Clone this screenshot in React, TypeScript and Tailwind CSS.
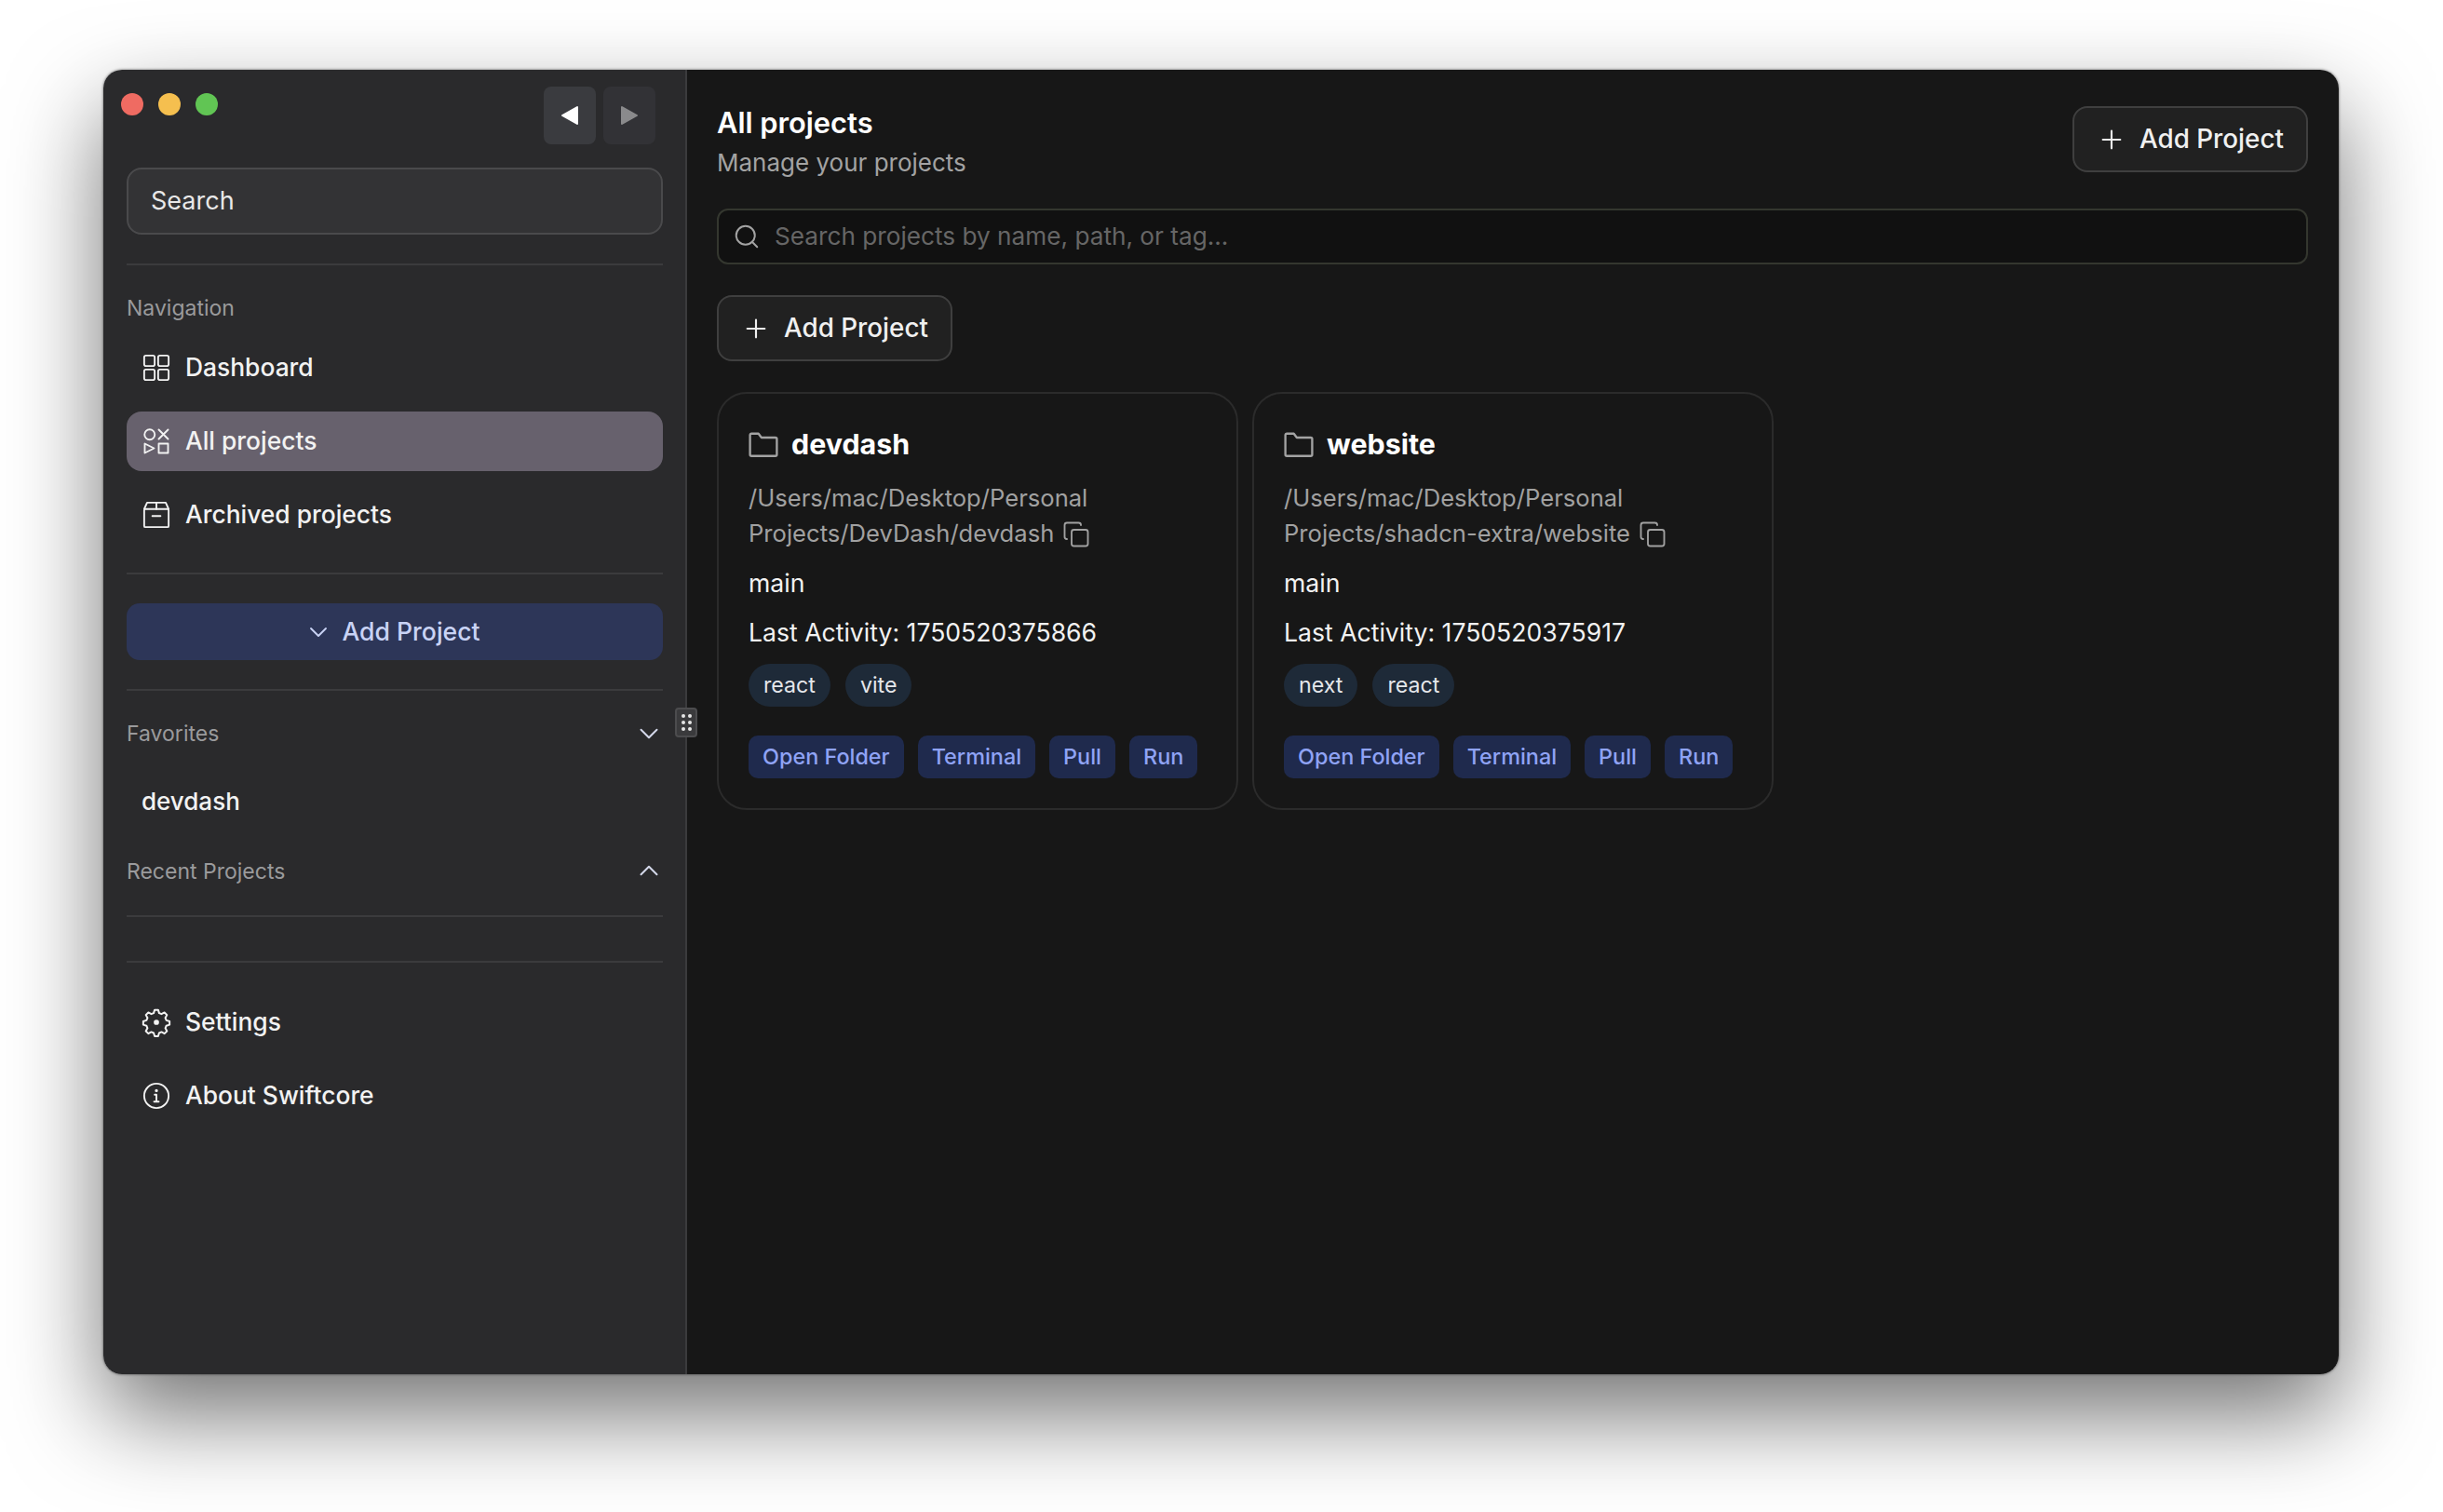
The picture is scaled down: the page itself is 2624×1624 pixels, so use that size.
import { ChevronDown, ChevronUp, Copy, Plus, Search } from "lucide-react";
import type { ReactNode } from "react";

const projects = [
  {
    name: "devdash",
    path: ["/Users/mac/Desktop/Personal", "Projects/DevDash/devdash"],
    branch: "main",
    activity: "1750520375866",
    tags: ["react", "vite"],
  },
  {
    name: "website",
    path: ["/Users/mac/Desktop/Personal", "Projects/shadcn-extra/website"],
    branch: "main",
    activity: "1750520375917",
    tags: ["next", "react"],
  },
];

const actions = ["Open Folder", "Terminal", "Pull", "Run"];

function Svg({ children, className }: { children: ReactNode; className: string }) {
  return (
    <svg viewBox="0 0 24 24" fill="none" stroke="currentColor" strokeWidth="1.5" strokeLinecap="round" strokeLinejoin="round" className={className}>
      {children}
    </svg>
  );
}

function DashboardIcon() {
  return (
    <Svg className="w-[30px] h-[30px] shrink-0">
      <rect x="1.5" y="1.5" width="9" height="9" rx="1.5" />
      <rect x="13.5" y="1.5" width="9" height="9" rx="1.5" />
      <rect x="1.5" y="13.5" width="9" height="9" rx="1.5" />
      <rect x="13.5" y="13.5" width="9" height="9" rx="1.5" />
    </Svg>
  );
}

function ShapesIcon() {
  return (
    <Svg className="w-[30px] h-[30px] shrink-0">
      <circle cx="6.2" cy="6.2" r="4.4" />
      <path d="M14 2l8 8M22 2l-8 8" />
      <path d="M2 14v8l8-4z" />
      <rect x="14" y="14" width="8" height="8" />
    </Svg>
  );
}

function ArchiveIcon() {
  return (
    <Svg className="w-[30px] h-[30px] shrink-0">
      <rect x="1.5" y="7" width="21" height="15.5" rx="1" />
      <path d="M1.5 7L4 1.5h16L22.5 7M12 1.5V7M8.5 13h7" />
    </Svg>
  );
}

function GearIcon() {
  return (
    <Svg className="w-[32px] h-[32px] shrink-0 -mx-[1px]">
      <path d="M10.6 2h2.8l.8 2.6 1.9.8 2.4-1.3 2 2-1.3 2.4.8 1.9 2.6.8v2.8l-2.6.8-.8 1.9 1.3 2.4-2 2-2.4-1.3-1.9.8-.8 2.6h-2.8l-.8-2.6-1.9-.8-2.4 1.3-2-2 1.3-2.4-.8-1.9-2.6-.8v-2.8l2.6-.8.8-1.9-1.3-2.4 2-2 2.4 1.3 1.9-.8z" />
      <circle cx="12" cy="12" r="1.4" fill="currentColor" />
    </Svg>
  );
}

function InfoIcon() {
  return (
    <Svg className="w-[30px] h-[30px] shrink-0">
      <circle cx="12" cy="12" r="10.5" />
      <path d="M10.5 11H12v6M10 17h4" />
      <circle cx="12" cy="7.5" r="0.6" fill="currentColor" />
    </Svg>
  );
}

function FolderIcon() {
  return (
    <svg viewBox="0 0 30 26" fill="none" stroke="currentColor" strokeWidth="2.2" strokeLinejoin="round" className="w-[32px] h-[28px] shrink-0 text-[#a3a3a3]">
      <path d="M1.5 3a1.5 1.5 0 0 1 1.5-1.5h7l3 4h14a1.5 1.5 0 0 1 1.5 1.5v15.5A1.5 1.5 0 0 1 27 24H3a1.5 1.5 0 0 1-1.5-1.5z" />
    </svg>
  );
}

function NavRow({ icon, label, active }: { icon: ReactNode; label: string; active?: boolean }) {
  return (
    <div className={`h-[64px] flex items-center gap-[16px] pl-[17px] rounded-[16px] text-[26.4px] font-medium text-[#f2f2f2] ${active ? "bg-[#67616d]" : ""}`}>
      {icon}
      <span>{label}</span>
    </div>
  );
}

function Divider({ className }: { className: string }) {
  return <div className={`h-[2px] bg-[#3b3b3d] ${className}`} />;
}

function AddProjectButton() {
  return (
    <button className="h-[71px] w-[253px] shrink-0 flex items-center gap-[14px] pl-[24px] rounded-[16px] border-2 border-[#3f3f3f] bg-[#212121] text-[27.8px] font-medium text-[#f0f0f0]">
      <Plus className="w-[32px] h-[32px]" strokeWidth={1.6} />
      Add Project
    </button>
  );
}

function ProjectCard({ project }: { project: (typeof projects)[number] }) {
  return (
    <div className="w-[560px] h-[449px] rounded-[32px] border-2 border-[#2b2b2b] pt-[35px] px-[32px]">
      <div className="h-[40px] flex items-center gap-[14px]">
        <FolderIcon />
        <span className="text-[30.4px] font-bold text-white">{project.name}</span>
      </div>
      <p className="mt-[18px] text-[25.6px] leading-[38px] text-[#a1a1a1] whitespace-nowrap">
        {project.path[0]}
        <br />
        {project.path[1]}
        <Copy className="inline-block ml-[9px] w-[30px] h-[30px] -mt-[2px]" strokeWidth={1.5} />
      </p>
      <p className="mt-[15px] text-[26.6px] leading-[38px] text-[#f2f2f2]">{project.branch}</p>
      <p className="mt-[15px] text-[26.6px] leading-[38px] text-[#f2f2f2]">Last Activity: {project.activity}</p>
      <div className="mt-[15px] flex gap-[16px]">
        {project.tags.map((tag) => (
          <span key={tag} className="h-[46px] px-[16px] flex items-center rounded-full bg-[#1e2a38] text-[23.2px] text-[#e5e7eb]">
            {tag}
          </span>
        ))}
      </div>
      <div className="mt-[31px] flex gap-[15px]">
        {actions.map((action) => (
          <button key={action} className="h-[46px] px-[15px] flex items-center rounded-[10px] bg-[#1f2a4d] text-[23.4px] font-medium text-[#8fa3f5]">
            {action}
          </button>
        ))}
      </div>
    </div>
  );
}

export default function App() {
  return (
    <div className="w-[2624px] h-[1624px] overflow-hidden bg-white pt-[75px] pl-[111px] font-['Inter',sans-serif]">
      <div className="relative w-[2401px] h-[1401px] flex rounded-[20px] overflow-hidden shadow-[0_44px_100px_rgba(0,0,0,0.55),0_0_3px_rgba(0,0,0,0.6)]">
        <aside className="w-[627px] shrink-0 bg-[#2a2a2c] border-r-2 border-[#3b3b3d] pl-[25px] pr-[24px]">
          <div className="flex justify-between items-start pt-[18px]">
            <div className="flex gap-[16px] -ml-[6px] mt-[7px]">
              <span className="w-[24px] h-[24px] rounded-full bg-[#ef6b62]" />
              <span className="w-[24px] h-[24px] rounded-full bg-[#f5bf4f]" />
              <span className="w-[24px] h-[24px] rounded-full bg-[#61c554]" />
            </div>
            <div className="flex gap-[8px] mr-[8px]">
              <div className="w-[56px] h-[62px] rounded-[8px] bg-[#3a3b3f] flex items-center justify-center">
                <svg viewBox="0 0 20 22" className="w-[20px] h-[22px] text-white" fill="currentColor" stroke="currentColor" strokeWidth="2" strokeLinejoin="round"><path d="M18 2v18L2 11z" /></svg>
              </div>
              <div className="w-[56px] h-[62px] rounded-[8px] bg-[#323236] flex items-center justify-center">
                <svg viewBox="0 0 20 22" className="w-[20px] h-[22px] text-[#8a8a8c]" fill="currentColor" stroke="currentColor" strokeWidth="2" strokeLinejoin="round"><path d="M2 2v18l16-9z" /></svg>
              </div>
            </div>
          </div>

          <div className="mt-[25px] h-[72px] rounded-[16px] border-2 border-[#4a4a4c] bg-[#333335] flex items-center pl-[24px] pt-[1px] text-[27px] text-[#e8e8e8]">
            Search
          </div>
          <Divider className="mt-[31px]" />

          <div className="mt-[30px] h-[32px] flex items-center text-[23px] text-[#9a9a9c]">Navigation</div>
          <div className="mt-[16px] flex flex-col gap-[15px]">
            <NavRow icon={<DashboardIcon />} label="Dashboard" />
            <NavRow icon={<ShapesIcon />} label="All projects" active />
            <NavRow icon={<ArchiveIcon />} label="Archived projects" />
          </div>
          <Divider className="mt-[30px]" />

          <button className="mt-[31px] w-full h-[61px] pr-[6px] rounded-[14px] bg-[#2d3658] flex items-center justify-center gap-[9px] text-[26.6px] font-medium text-[#c9d3f5]">
            <ChevronDown className="w-[32px] h-[32px]" strokeWidth={1.4} />
            Add Project
          </button>
          <Divider className="mt-[31px]" />

          <div className="mt-[30px] h-[32px] flex items-center justify-between text-[23px] text-[#9a9a9c]">
            Favorites
            <ChevronDown className="w-[34px] h-[34px] text-[#d4d8ea] -mr-[2px]" strokeWidth={1.4} />
          </div>
          <div className="mt-[24px] h-[64px] flex items-center pl-[16px] text-[26px] font-medium text-[#f2f2f2]">devdash</div>
          <div className="mt-[28px] h-[32px] flex items-center justify-between text-[23px] text-[#9a9a9c]">
            Recent Projects
            <ChevronUp className="w-[34px] h-[34px] text-[#d4d8ea] -mr-[2px] -mt-[2px]" strokeWidth={1.4} />
          </div>
          <Divider className="mt-[31px]" />
          <Divider className="mt-[47px]" />

          <div className="mt-[32px] flex flex-col gap-[15px]">
            <NavRow icon={<GearIcon />} label="Settings" />
            <NavRow icon={<InfoIcon />} label="About Swiftcore" />
          </div>
        </aside>

        <main className="flex-1 bg-[#171717] pt-[37px] pl-[32px] pr-[33px]">
          <div className="flex justify-between items-start">
            <div>
              <h1 className="h-[40px] flex items-center text-[30.8px] font-semibold text-white">All projects</h1>
              <p className="mt-[3px] h-[38px] flex items-center text-[26px] text-[#a3a3a3]">Manage your projects</p>
            </div>
            <div className="mt-[2px]">
              <AddProjectButton />
            </div>
          </div>

          <div className="mt-[31px] h-[60px] rounded-[12px] border-2 border-[#34372f] bg-[#111111] flex items-center pl-[15px] gap-[15px] text-[26.2px] text-[#666666]">
            <Search className="w-[30px] h-[30px] text-[#a3a3a3]" strokeWidth={1.6} />
            Search projects by name, path, or tag...
          </div>

          <div className="mt-[33px]">
            <AddProjectButton />
          </div>

          <div className="mt-[33px] flex gap-[15px]">
            {projects.map((project) => (
              <ProjectCard key={project.name} project={project} />
            ))}
          </div>
        </main>

        <div className="absolute left-[614px] top-[685px] w-[24px] h-[32px] rounded-[4px] border-2 border-[#4c4c4e] bg-[#3a3a3c] flex items-center justify-center">
          <div className="grid grid-cols-2 gap-x-[3px] gap-y-[3px]">
            {[0, 1, 2, 3, 4, 5].map((i) => (
              <span key={i} className="w-[4px] h-[4px] rounded-full bg-[#e5e5e5]" />
            ))}
          </div>
        </div>
      </div>
    </div>
  );
}
